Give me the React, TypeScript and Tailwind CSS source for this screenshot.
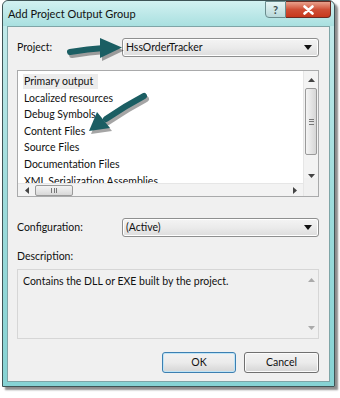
import React from "react";

const font = { fontFamily: 'Lato, "Open Sans", sans-serif' };

const items = [
  "Primary output",
  "Localized resources",
  "Debug Symbols",
  "Content Files",
  "Source Files",
  "Documentation Files",
  "XML Serialization Assemblies",
];

const Caret = () => (
  <svg width="8" height="5" viewBox="0 0 8 5">
    <path d="M0 0h8L4 5z" fill="#111" />
  </svg>
);

const Combo = ({ text }: { text: string }) => (
  <div className="w-[197px] h-[19px] rounded-[3px] border border-[#8e8f8f] bg-gradient-to-b from-[#f4f4f4] via-[#ebebeb] to-[#dddddd] flex items-center justify-between pl-[3px] pr-[6px] shadow-[inset_0_0_0_1px_#ffffff]">
    <span className="text-[10.5px] text-[#111] leading-none">{text}</span>
    <Caret />
  </div>
);

const Arrow = ({ d, head }: { d: string; head: string }) => (
  <g>
    <g transform="translate(2 3)" opacity="0.35">
      <path d={d} stroke="#000" strokeWidth="6" strokeLinecap="round" fill="none" />
      <path d={head} fill="#000" />
    </g>
    <path d={d} stroke="#1b5e63" strokeWidth="6" strokeLinecap="round" fill="none" />
    <path d={head} fill="#1b5e63" />
  </g>
);

export default function App() {
  return (
    <div className="w-[340px] h-[398px] bg-white relative overflow-hidden" style={font}>
      {/* window */}
      <div className="ml-[2px] w-[333px] h-[387px] border border-[#3e5355] rounded-t-[6px] shadow-[3px_3px_2px_rgba(0,0,0,0.45)] bg-gradient-to-b from-[#c6ecec] via-[#9edcdc] to-[#86d3d4] flex flex-col">
        {/* title bar */}
        <div className="h-[25px] flex items-start justify-between pl-[5px] relative bg-gradient-to-b from-[#d2f1f1] to-[#a9e0e0] rounded-t-[6px]">
          <span className="mt-[7px] text-[11px] text-[#111] leading-none">Add Project Output Group</span>
          <div className="flex mr-[3px]">
            <div className="w-[21px] h-[17px] border border-[#6a8c8e] rounded-bl-[4px] bg-gradient-to-b from-[#e6f4f4] to-[#b9d9da] flex items-center justify-center text-[11px] text-[#3c4c4d] font-bold leading-none">?</div>
            <div className="w-[45px] h-[17px] border border-l-0 border-[#6b2a22] rounded-br-[4px] bg-gradient-to-b from-[#e8a08c] via-[#cf4f36] to-[#c7381c] flex items-center justify-center">
              <svg width="11" height="10" viewBox="0 0 11 10">
                <path d="M1.5 1.5l8 7M9.5 1.5l-8 7" stroke="#fff" strokeWidth="2.6" strokeLinecap="round" />
              </svg>
            </div>
          </div>
        </div>
        {/* content */}
        <div className="mx-[4px] mb-[4px] flex-1 border border-[#7fa5a7] bg-[#f0f0f0] pl-[9px] pr-[10px] pt-[11px] flex flex-col">
          <div className="flex items-center justify-between">
            <span className="text-[10.5px] text-[#111] leading-none">Project:</span>
            <Combo text="HssOrderTracker" />
          </div>

          {/* listbox */}
          <div className="mt-[13px] h-[127px] border border-[#a9aaab] bg-white flex">
            <div className="flex-1 flex flex-col min-w-0">
              <div className="flex-1 overflow-hidden pl-[5px] pt-[2px]">
                {items.map((t, i) => (
                  <div key={t} className="h-[16.6px] flex items-center">
                    <span className={`text-[10.5px] text-[#111] leading-none px-[1px] py-[2px] whitespace-nowrap ${i === 0 ? "bg-[#ececec] pr-[5px]" : ""}`}>{t}</span>
                  </div>
                ))}
              </div>
              {/* horizontal scrollbar */}
              <div className="h-[13px] bg-[#f3f3f3] border-t border-[#e6e6e6] flex items-center relative">
                <svg className="ml-[7px]" width="4" height="7" viewBox="0 0 4 7"><path d="M4 0v7L0 3.5z" fill="#444" /></svg>
                <div className="ml-[6px] w-[38px] h-[11px] rounded-[2px] border border-[#9a9a9a] bg-gradient-to-b from-[#f4f4f4] to-[#d8d8d8] flex items-center justify-center">
                  <div className="flex gap-[1.5px]">
                    <div className="w-[1px] h-[5px] bg-[#777]" />
                    <div className="w-[1px] h-[5px] bg-[#777]" />
                    <div className="w-[1px] h-[5px] bg-[#777]" />
                  </div>
                </div>
                <svg className="ml-auto mr-[6px]" width="4" height="7" viewBox="0 0 4 7"><path d="M0 0v7L4 3.5z" fill="#444" /></svg>
              </div>
            </div>
            {/* vertical scrollbar */}
            <div className="w-[15px] bg-[#f3f3f3] border-l border-[#e6e6e6] flex flex-col items-center">
              <svg className="mt-[7px]" width="7" height="4" viewBox="0 0 7 4"><path d="M0 4h7L3.5 0z" fill="#444" /></svg>
              <div className="mt-[6px] w-[12px] h-[67px] rounded-[2px] border border-[#9a9a9a] bg-gradient-to-r from-[#f4f4f4] to-[#d6d6d6] flex items-center justify-center">
                <div className="flex flex-col gap-[1.5px]">
                  <div className="w-[5px] h-[1px] bg-[#777]" />
                  <div className="w-[5px] h-[1px] bg-[#777]" />
                  <div className="w-[5px] h-[1px] bg-[#777]" />
                </div>
              </div>
              <svg className="mt-[19px]" width="7" height="4" viewBox="0 0 7 4"><path d="M0 0h7L3.5 4z" fill="#444" /></svg>
              <div className="flex-1 w-full bg-[#f0f0f0]" />
            </div>
          </div>

          <div className="mt-[21px] flex items-center justify-between">
            <span className="text-[10.5px] text-[#111] leading-none">Configuration:</span>
            <Combo text="(Active)" />
          </div>

          <span className="mt-[14px] text-[10.5px] text-[#111] leading-none">Description:</span>

          <div className="mt-[7px] h-[70px] border border-[#d6d6d6] bg-[#f0f0f0] flex">
            <span className="flex-1 pl-[5px] pt-[6px] text-[10.5px] text-[#111] leading-none">Contains the DLL or EXE built by the project.</span>
            <div className="w-[14px] flex flex-col items-center justify-between py-[8px]">
              <svg width="7" height="4" viewBox="0 0 7 4"><path d="M0 4h7L3.5 0z" fill="#aaa" /></svg>
              <svg width="7" height="4" viewBox="0 0 7 4"><path d="M0 0h7L3.5 4z" fill="#aaa" /></svg>
            </div>
          </div>

          <div className="mt-[13px] flex justify-end gap-[8px]">
            <button className="w-[74px] h-[21px] rounded-[3px] border border-[#3c7fb1] bg-gradient-to-b from-[#f2f2f2] via-[#ebebeb] to-[#d5d5d5] shadow-[inset_0_0_0_1px_#bfe4f6] text-[10.5px] text-[#111] leading-none">OK</button>
            <button className="w-[75px] h-[21px] rounded-[3px] border border-[#707070] bg-gradient-to-b from-[#f2f2f2] via-[#ebebeb] to-[#d5d5d5] shadow-[inset_0_0_0_1px_#fbfbfb] text-[10.5px] text-[#111] leading-none">Cancel</button>
          </div>
        </div>
      </div>

      {/* callout arrows */}
      <svg className="absolute left-0 top-0 pointer-events-none" width="340" height="398" viewBox="0 0 340 398">
        <Arrow d="M70 52 Q88 49 104 48" head="M100 38 L122 47.5 L100 58 Z" />
        <Arrow d="M144 96 Q125 106 106 119" head="M97 112 L89 131 L110 128 Z" />
      </svg>
    </div>
  );
}
